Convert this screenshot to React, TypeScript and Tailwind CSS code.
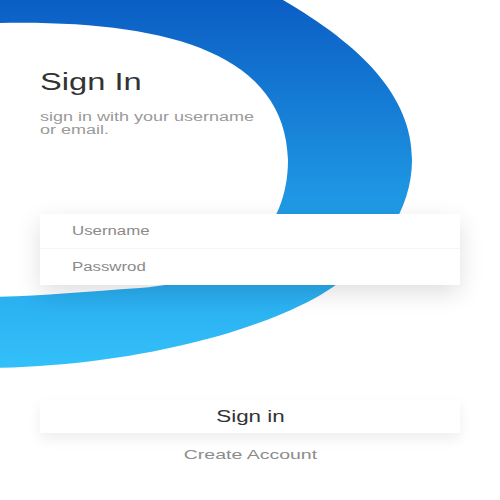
import React from "react";

export default function App() {
  return (
    <div
      className="relative w-[500px] h-[500px] overflow-hidden bg-white"
      style={{ fontFamily: '"Liberation Sans", Arial, sans-serif' }}
    >
      <svg
        className="absolute inset-0"
        width="500"
        height="500"
        viewBox="0 0 500 500"
      >
        <defs>
          <linearGradient id="ring" x1="0" y1="0" x2="0" y2="366" gradientUnits="userSpaceOnUse">
            <stop offset="0" stopColor="#0b5ec4" />
            <stop offset="0.55" stopColor="#1f98e4" />
            <stop offset="1" stopColor="#33c0f9" />
          </linearGradient>
        </defs>
        <path
          fill="url(#ring)"
          fillRule="evenodd"
          d="M -20,-20 L 270,-20 L 283,0 C 360,45 412,95 412,160 C 412,210 380,255 333,287 C 270,330 130,368 -20,368 Z M -20,23 L 0,23 C 160,20 285,50 288,160 C 288,230 240,280 140,288 C 80,292 30,297 -20,297 Z"
        />
      </svg>

      <div className="relative z-10 flex flex-col px-10 pt-[68px]">
        <h1 className="h-[28px] text-[23px] leading-[28px] text-[#333333] font-normal">
          <span className="inline-block origin-left scale-x-[1.42]">Sign In</span>
        </h1>
        <div className="mt-[15px] flex flex-col text-[12px] leading-[13px] text-[#9a9a9a]">
          <span className="inline-block origin-left scale-x-[1.5] whitespace-nowrap">
            sign in with your username
          </span>
          <span className="inline-block origin-left scale-x-[1.5] whitespace-nowrap">
            or email.
          </span>
        </div>

        <div className="mt-[77px] flex flex-col bg-white shadow-[0_8px_24px_rgba(0,0,0,0.13)]">
          <div className="flex h-[35px] items-center border-b border-[#f4f4f4] pl-8 text-[12px] text-[#8a8a8a]">
            <span className="inline-block origin-left scale-x-[1.4]">Username</span>
          </div>
          <div className="flex h-[36px] items-center pl-8 text-[12px] text-[#8a8a8a]">
            <span className="inline-block origin-left scale-x-[1.4]">Passwrod</span>
          </div>
        </div>

        <div className="mt-[115px] flex h-[33px] items-center justify-center bg-white shadow-[0_6px_14px_rgba(0,0,0,0.07)] text-[16px] text-[#333333]">
          <span className="inline-block scale-x-[1.4]">Sign in</span>
        </div>

        <div className="mt-[14px] flex h-[16px] items-center justify-center text-[13px] leading-[16px] text-[#8c8c8c]">
          <span className="inline-block scale-x-[1.5]">Create Account</span>
        </div>
      </div>
    </div>
  );
}
